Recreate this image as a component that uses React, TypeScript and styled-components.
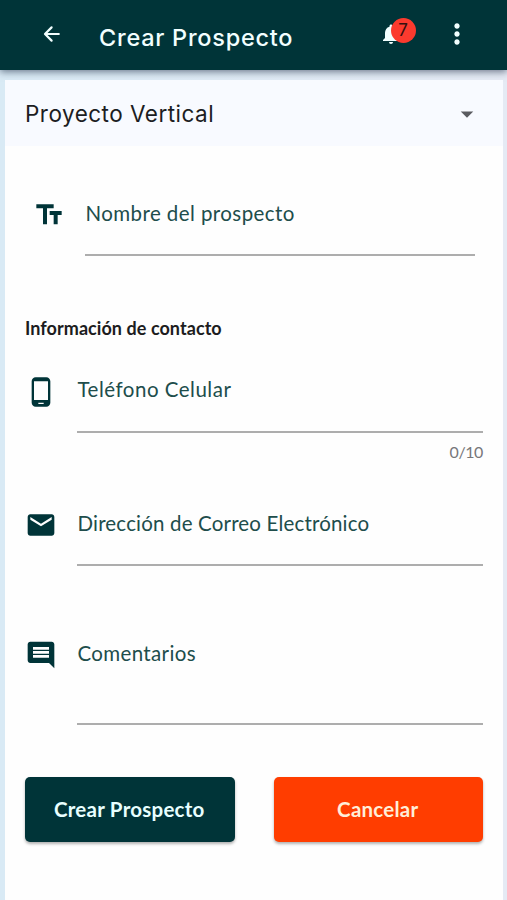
import React from "react";
import styled, { createGlobalStyle } from "styled-components";
import {
  MdArrowDropDown,
  MdComment,
  MdEmail,
  MdMoreVert,
  MdNotifications,
  MdPhoneAndroid,
  MdTextFields,
} from "react-icons/md";

const teal = "#003438";

const GlobalStyle = createGlobalStyle`
  *, *::before, *::after { box-sizing: border-box; }
  body {
    margin: 0;
    background: #dfebf5;
    font-family: Lato, "Noto Sans", sans-serif;
    color: #1c1c20;
  }
  svg { display: block; flex: none; }
`;

const Screen = styled.div`
  display: flex;
  flex-direction: column;
  height: 900px;
  overflow: hidden;
  background: linear-gradient(90deg, #d9eaf5, #e5eaf4);
`;

const AppBar = styled.header`
  display: flex;
  align-items: flex-start;
  flex: none;
  height: 70px;
  padding: 0 34.5px 0 40px;
  background: ${teal};
  color: #f2ffff;
  box-shadow: 0 2px 7px rgba(20, 35, 60, 0.55);
`;

const IconButton = styled.button<{ $top: number }>`
  margin: ${(p) => p.$top}px 0 0;
  padding: 0;
  border: 0;
  background: none;
  color: inherit;
`;

const Title = styled.h1`
  flex: 1;
  margin: 23px 0 0 35px;
  font: 500 23.5px/30px Inter, sans-serif;
  letter-spacing: 0.75px;
  white-space: nowrap;
`;

const Notifications = styled(IconButton)`
  position: relative;
  margin-right: 38px;
`;

const Badge = styled.span`
  position: absolute;
  left: 12px;
  top: -4px;
  width: 25px;
  height: 25px;
  border-radius: 50%;
  background: #fb3a2e;
  color: #35100f;
  font: 400 17px/25px Inter, sans-serif;
  text-align: center;
`;

const Card = styled.main`
  flex: 1;
  margin: 10px 4px 0 5px;
  background: #fefefe;
`;

const ProjectSelect = styled.div`
  display: flex;
  align-items: center;
  justify-content: space-between;
  height: 66px;
  padding: 1px 21px 0 20px;
  background: #f8faff;
  color: #5a5b60;
`;

const ProjectName = styled.span`
  color: #1c1d22;
  font: 400 22.5px/30px Inter, sans-serif;
  letter-spacing: 0.48px;
`;

const Form = styled.form`
  display: flex;
  flex-direction: column;
  padding: 0 20px;
`;

const Row = styled.div<{ $top: number; $height: number; $inset?: boolean }>`
  display: grid;
  grid-template-columns: 32px 1fr;
  column-gap: 20px;
  height: ${(p) => p.$height}px;
  margin: ${(p) => p.$top}px ${(p) => (p.$inset ? 8 : 0)}px 0;
  color: ${teal};
`;

const Field = styled.label<{ $spacing: number; $line?: number }>`
  height: 100%;
  border-bottom: 2px solid #adadad;
  color: #204d4b;
  font-size: 20.5px;
  line-height: ${(p) => p.$line ?? 28}px;
  letter-spacing: ${(p) => p.$spacing}px;
  text-indent: 0.5px;
  white-space: nowrap;
`;

const SectionTitle = styled.h2`
  margin: 60px 0 0;
  font-size: 18px;
  font-weight: 700;
  line-height: 24px;
  letter-spacing: 0.06px;
`;

const Counter = styled.span`
  align-self: flex-end;
  height: 20px;
  margin-top: 10px;
  color: #77777a;
  font-size: 16px;
  line-height: 18px;
  letter-spacing: -0.4px;
`;

const Actions = styled.div`
  display: grid;
  grid-template-columns: 1fr 1fr;
  gap: 39px;
  margin-top: 52px;
`;

const ActionButton = styled.button<{ $color: string; $ink: string }>`
  height: 65px;
  padding: 0 1px 2px 0;
  border: 0;
  border-radius: 5px;
  background: ${(p) => p.$color};
  color: ${(p) => p.$ink};
  font: 700 20.5px/28px Lato, sans-serif;
  letter-spacing: 0.25px;
  box-shadow: 0 2px 3px rgba(0, 0, 0, 0.3);
`;

const BackArrow = () => (
  <svg
    width="24"
    height="24"
    viewBox="0 0 24 24"
    fill="none"
    stroke="currentColor"
    strokeWidth="2.2"
    strokeLinecap="round"
    strokeLinejoin="round"
  >
    <path d="M18.8 12H5.2M11.6 5.4 5 12l6.6 6.6" />
  </svg>
);

export default function App() {
  return (
    <>
      <GlobalStyle />
      <Screen>
        <AppBar>
          <IconButton $top={22} aria-label="Volver">
            <BackArrow />
          </IconButton>
          <Title>Crear Prospecto</Title>
          <Notifications $top={22} aria-label="Notificaciones">
            <MdNotifications size={24} />
            <Badge>7</Badge>
          </Notifications>
          <IconButton $top={18} aria-label="Más opciones">
            <MdMoreVert size={32} />
          </IconButton>
        </AppBar>
        <Card>
          <ProjectSelect>
            <ProjectName>Proyecto Vertical</ProjectName>
            <MdArrowDropDown size={30} />
          </ProjectSelect>
          <Form>
            <Row $top={53} $height={57} $inset>
              <MdTextFields size={32} />
              <Field $spacing={0.42}>Nombre del prospecto</Field>
            </Row>
            <SectionTitle>Información de contacto</SectionTitle>
            <Row $top={36} $height={57}>
              <MdPhoneAndroid size={32} />
              <Field $spacing={0.5} $line={27}>
                Teléfono Celular
              </Field>
            </Row>
            <Counter>0/10</Counter>
            <Row $top={46} $height={57}>
              <MdEmail size={32} />
              <Field $spacing={0.17}>Dirección de Correo Electrónico</Field>
            </Row>
            <Row $top={73} $height={86}>
              <MdComment size={32} />
              <Field $spacing={0.35}>Comentarios</Field>
            </Row>
            <Actions>
              <ActionButton type="button" $color={teal} $ink="#e8ffff">
                Crear Prospecto
              </ActionButton>
              <ActionButton type="button" $color="#ff3d00" $ink="#ffeed8">
                Cancelar
              </ActionButton>
            </Actions>
          </Form>
        </Card>
      </Screen>
    </>
  );
}
